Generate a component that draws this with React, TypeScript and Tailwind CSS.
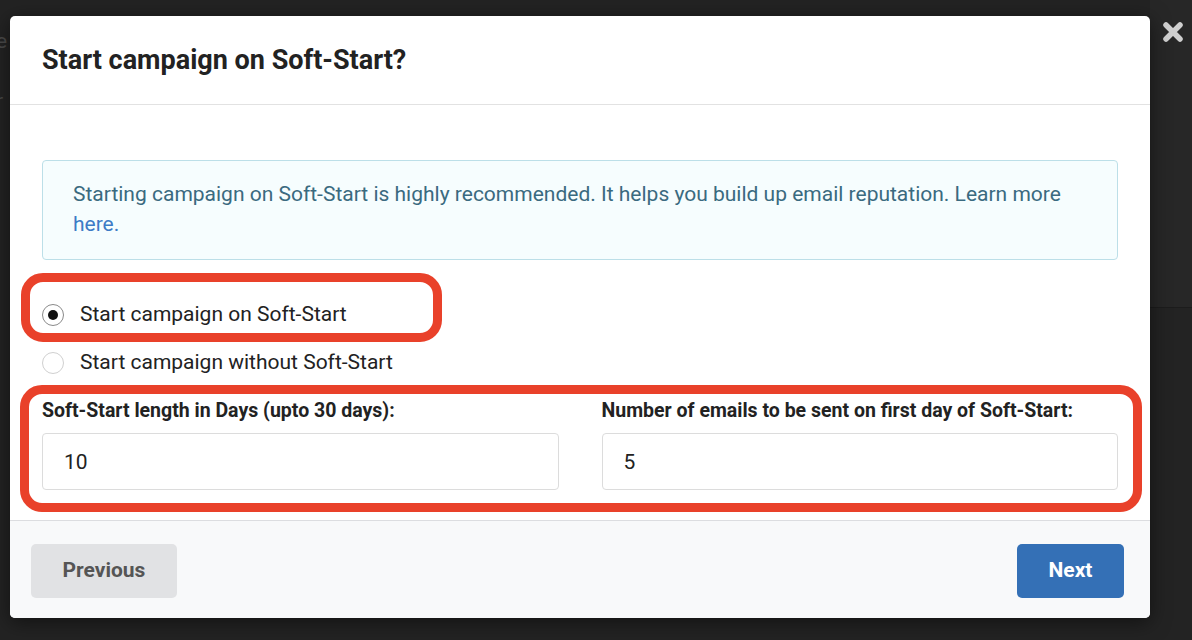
import { useState } from 'react';

function Radio({ checked, label, onClick }: { checked: boolean; label: string; onClick: () => void }) {
  return (
    <label onClick={onClick} className="flex h-[30px] cursor-pointer items-center gap-[16px]">
      <span
        className={`flex h-[22px] w-[22px] items-center justify-center rounded-full border bg-white ${
          checked ? 'border-[#8a8a8a]' : 'border-[#d0d0d0]'
        }`}
      >
        {checked && <span className="h-[10px] w-[10px] rounded-full bg-[#111]" />}
      </span>
      <span className="text-[21px] text-[#222]">{label}</span>
    </label>
  );
}

function Field({ label, value }: { label: string; value: string }) {
  return (
    <div className="flex flex-col">
      <div className="mb-[11px] text-[19.5px] font-bold leading-[22px] text-[#222]">{label}</div>
      <input
        defaultValue={value}
        className="h-[57px] w-full rounded-[4px] border border-[#dcdcdc] bg-white px-[21px] text-[21px] text-[#222] outline-none"
      />
    </div>
  );
}

export default function App() {
  const [softStart, setSoftStart] = useState(true);

  return (
    <div
      className="relative h-[640px] w-[1192px] overflow-hidden bg-[#232323] pl-[10px] pt-[16px]"
      style={{ fontFamily: 'Roboto, "Liberation Sans", sans-serif' }}
    >
      {/* dimmed page behind the overlay */}
      <div className="absolute left-[-4px] top-[26px] text-[21px] text-[#4a4a4a]">e</div>
      <div className="absolute left-[-4px] top-[86px] text-[21px] text-[#4a4a4a]">r</div>
      <div className="absolute right-0 top-0 h-[308px] w-[42px] border-b border-[#1c1c1c] bg-[#272727]" />

      {/* close */}
      <button className="absolute left-[1162px] top-[21px] text-[#cfcfcf]">
        <svg width="22" height="22" viewBox="0 0 22 22">
          <path d="M4 4L18 18M18 4L4 18" stroke="currentColor" strokeWidth="5.5" strokeLinecap="round" />
        </svg>
      </button>

      <div className="relative w-[1140px] rounded-[5px] bg-white shadow-[0_4px_20px_rgba(0,0,0,0.5)]">
        {/* Header */}
        <div className="flex h-[89px] items-center border-b border-[#e2e2e2] px-[32px]">
          <h3 className="text-[27px] font-bold text-[#222]">Start campaign on Soft-Start?</h3>
        </div>

        {/* Body */}
        <div className="relative px-[32px] pb-[30px] pt-[55px]">
          <div className="rounded-[4px] border border-[#bcdfe8] bg-[#f6fdfe] px-[30px] pb-[20px] pt-[18px] text-[21px] leading-[30px] text-[#3a6a80]">
            Starting campaign on Soft-Start is highly recommended. It helps you build up email reputation. Learn more{' '}
            <a className="text-[#3d7bc6]">here.</a>
          </div>

          <div className="mt-[40px] flex flex-col gap-[18px]">
            <Radio checked={softStart} label="Start campaign on Soft-Start" onClick={() => setSoftStart(true)} />
            <Radio checked={!softStart} label="Start campaign without Soft-Start" onClick={() => setSoftStart(false)} />
          </div>

          <div className="mt-[22px] grid grid-cols-2 gap-x-[43px]">
            <Field label="Soft-Start length in Days (upto 30 days):" value="10" />
            <Field label="Number of emails to be sent on first day of Soft-Start:" value="5" />
          </div>

          {/* annotation marks */}
          <div className="pointer-events-none absolute left-[11px] top-[168px] h-[69px] w-[421px] rounded-[22px] border-[9px] border-[#e9412a]" />
          <div className="pointer-events-none absolute left-[10px] top-[280px] h-[127px] w-[1122px] rounded-[22px] border-[9px] border-[#e9412a]" />
        </div>

        {/* Footer */}
        <div className="flex items-center justify-between rounded-b-[5px] border-t border-[#dcdde0] bg-[#f8f9fa] pb-[20px] pl-[21px] pr-[26px] pt-[23px]">
          <button className="h-[54px] w-[146px] rounded-[5px] bg-[#e1e2e4] text-[21px] font-bold text-[#555]">
            Previous
          </button>
          <button className="h-[54px] w-[107px] rounded-[5px] bg-[#3470b6] text-[21px] font-bold text-white">
            Next
          </button>
        </div>
      </div>
    </div>
  );
}
